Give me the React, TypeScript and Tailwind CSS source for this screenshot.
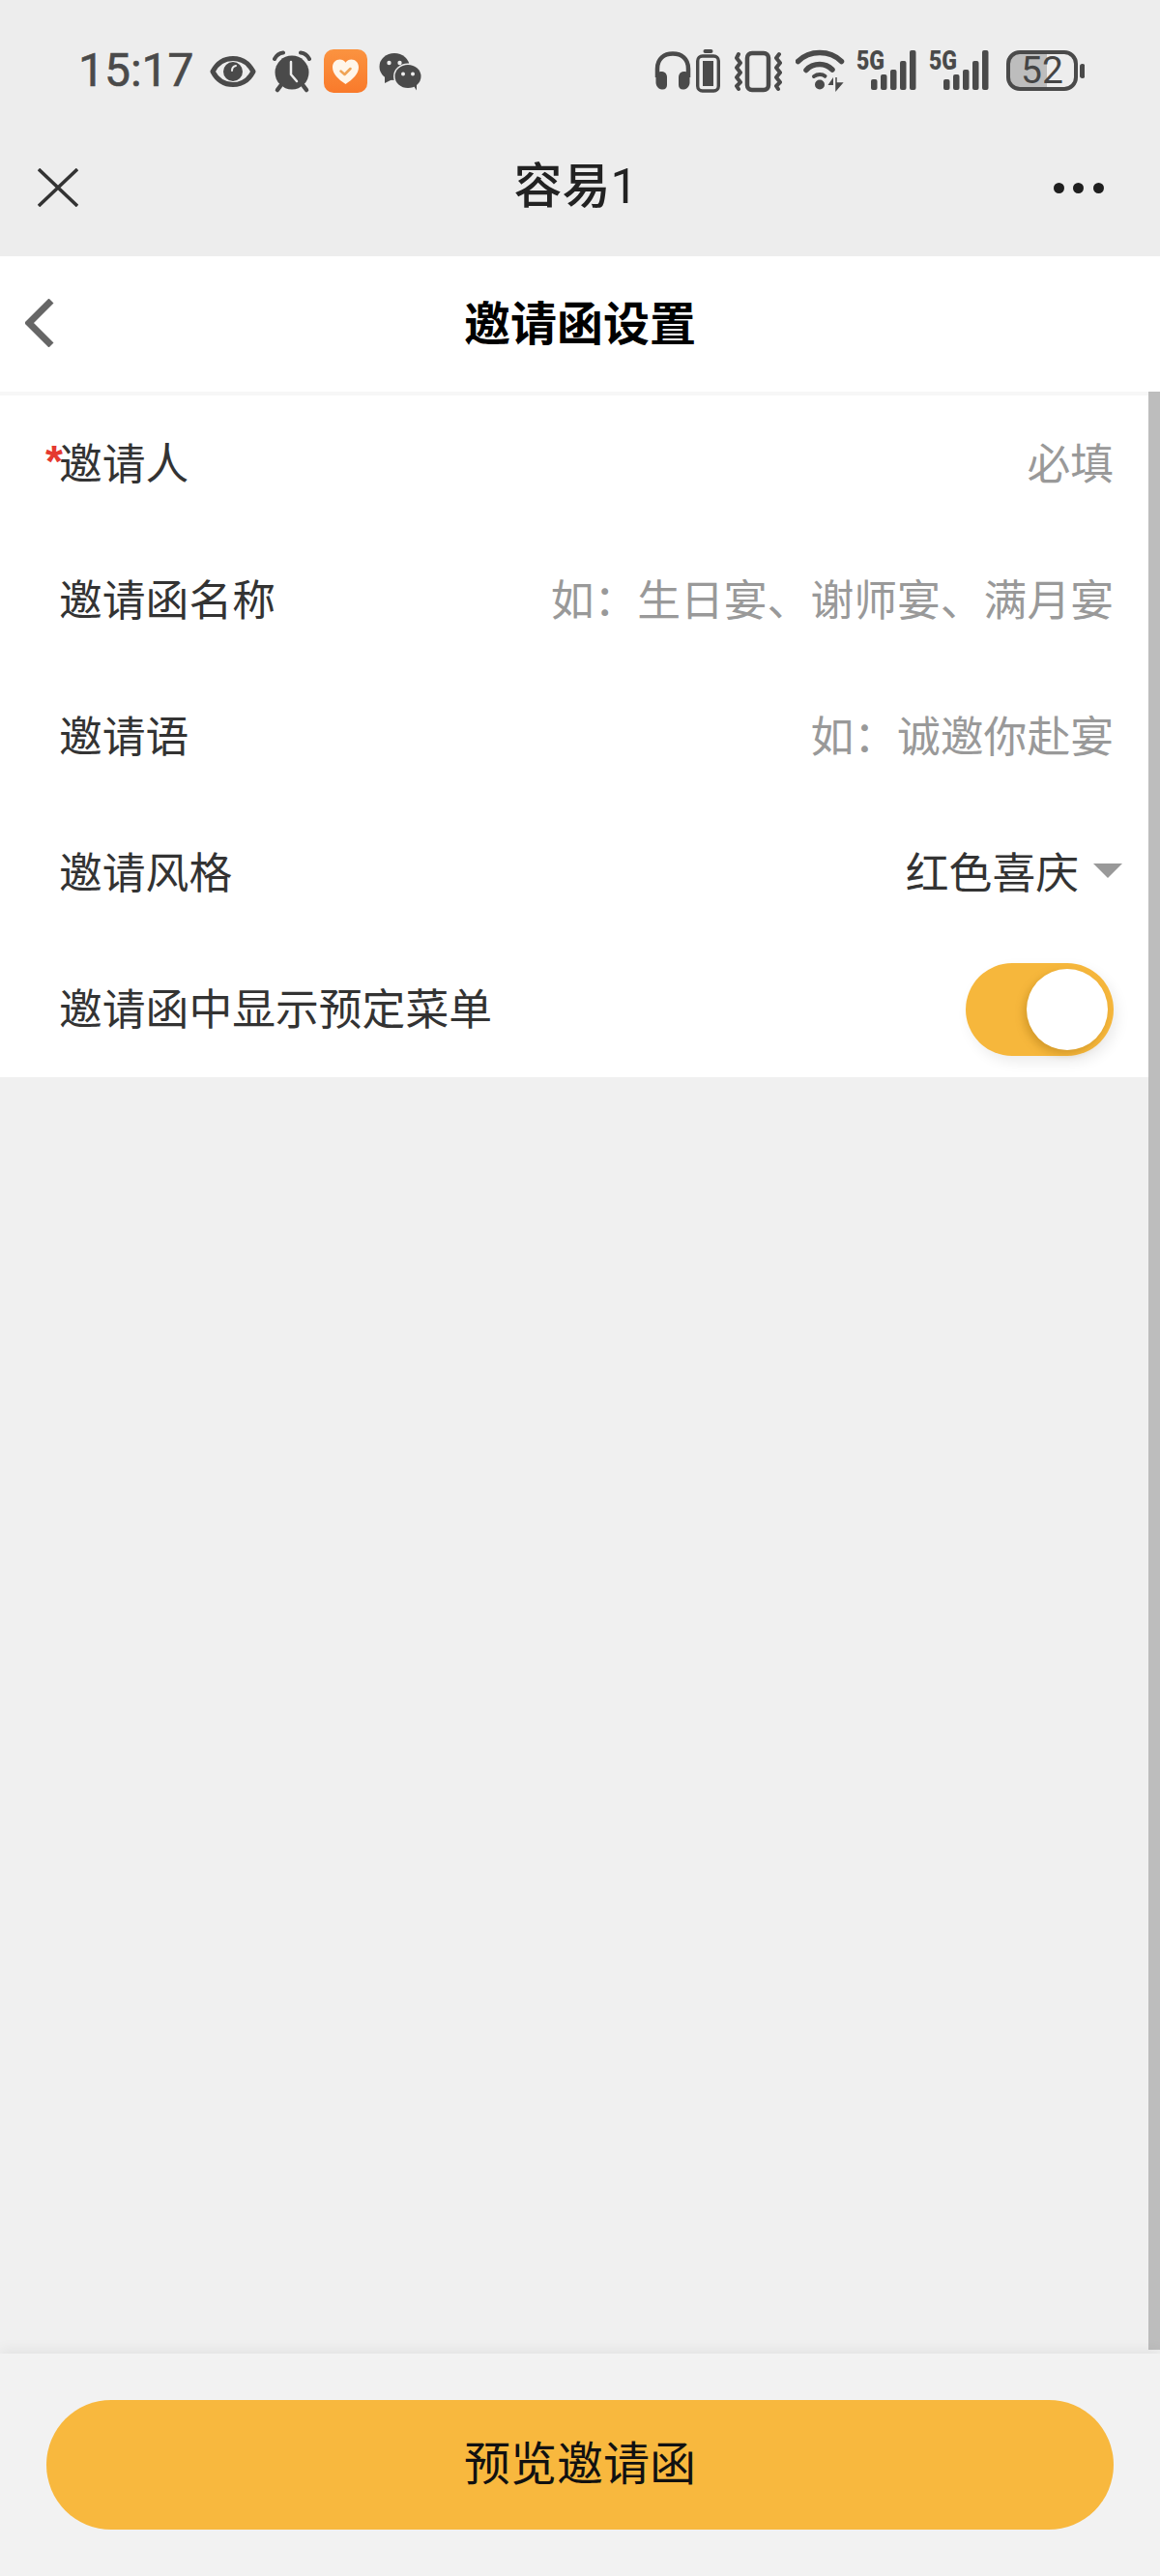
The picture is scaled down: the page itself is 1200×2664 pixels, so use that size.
import React from "react";

const INK = "#4a4a4a";

function Eye() {
  return (
    <svg width="48" height="50" viewBox="0 0 48 50" className="ml-[16px] shrink-0">
      <path d="M3 26C8 16.500 15 12.500 24 12.500S40 16.500 45 26C40 35.500 33 39.500 24 39.500S8 35.500 3 26Z" fill="none" stroke={INK} strokeWidth="5" strokeLinejoin="round" />
      <circle cx="24" cy="26" r="10" fill={INK} />
      <path d="M23 25c0-3 1.500-4.500 4-5" fill="none" stroke="#ededed" strokeWidth="2" strokeLinecap="round" />
    </svg>
  );
}

function Alarm() {
  return (
    <svg width="40" height="50" viewBox="0 0 40 50" className="ml-[17px] shrink-0">
      <circle cx="20" cy="27" r="17.500" fill={INK} />
      <path d="M2 13C4 9 7 7 11 6.500M38 13C36 9 33 7 29 6.500" fill="none" stroke={INK} strokeWidth="4" strokeLinecap="round" />
      <path d="M8 41l-3 4M32 41l3 4" stroke={INK} strokeWidth="4.500" strokeLinecap="round" />
      <path d="M19 16v13l6 7" fill="none" stroke="#ededed" strokeWidth="2.500" strokeLinecap="round" strokeLinejoin="round" />
    </svg>
  );
}

function Health() {
  return (
    <svg width="45" height="50" viewBox="0 0 45 50" className="ml-[13px] shrink-0">
      <defs>
        <linearGradient id="healthBg" x1="0" y1="0" x2="0" y2="1">
          <stop offset="0" stopColor="#fb9340" />
          <stop offset="1" stopColor="#f97a2b" />
        </linearGradient>
      </defs>
      <rect x="0" y="3" width="45" height="45" rx="10" fill="url(#healthBg)" />
      <path d="M22.500 39C15 34 9 28.500 9 21.500 9 16.500 12.500 13.500 16.500 13.500c2.500 0 4.500 1 6 3.200 1.500-2.200 3.500-3.200 6-3.200 4 0 7.500 3 7.500 8 0 7-6 12.500-13.500 17.500Z" fill="#fff6ea" />
      <path d="M17.500 25.500l4 3.500 6-6" fill="none" stroke="#f0a455" strokeWidth="2.500" strokeLinecap="round" strokeLinejoin="round" />
    </svg>
  );
}

function Wechat() {
  return (
    <svg width="44" height="50" viewBox="0 0 44 50" className="ml-[12px] shrink-0">
      <ellipse cx="16" cy="21" rx="15.500" ry="14" fill={INK} />
      <path d="M6 31l0 7 8-4Z" fill={INK} />
      <circle cx="10.500" cy="17" r="2.200" fill="#ededed" />
      <circle cx="21.500" cy="17" r="2.200" fill="#ededed" />
      <ellipse cx="30" cy="31" rx="15" ry="13.500" fill="#ededed" />
      <ellipse cx="30" cy="31" rx="13.500" ry="12" fill={INK} />
      <path d="M36 41l3 4.500 0-7Z" fill={INK} />
      <circle cx="25" cy="28.500" r="2" fill="#ededed" />
      <circle cx="35" cy="28.500" r="2" fill="#ededed" />
    </svg>
  );
}

function Headphones() {
  return (
    <svg width="38" height="50" viewBox="0 0 38 50" className="shrink-0">
      <path d="M3 32V23C3 12.500 10 7.500 19 7.500s16 5 16 15.500v9" fill="none" stroke={INK} strokeWidth="4.500" />
      <path d="M1.500 32c0-4 3-6.500 6.500-6 3.500.5 5 3 5 6v8c0 3-2 5-5.500 4.500C4 44 1.500 41 1.500 37Z" fill={INK} />
      <path d="M36.500 32c0-4-3-6.500-6.500-6-3.500.5-5 3-5 6v8c0 3 2 5 5.500 4.500C34 44 36.500 41 36.500 37Z" fill={INK} />
    </svg>
  );
}

function SmallBattery() {
  return (
    <svg width="25" height="50" viewBox="0 0 25 50" className="ml-[5px] shrink-0">
      <rect x="7.500" y="3" width="10" height="4" rx="2" fill={INK} />
      <rect x="1.700" y="10" width="21.600" height="36" rx="5" fill="none" stroke={INK} strokeWidth="3.400" />
      <rect x="7" y="15" width="11" height="26" fill={INK} />
    </svg>
  );
}

function Vibrate() {
  return (
    <svg width="50" height="50" viewBox="0 0 50 50" className="ml-[14px] shrink-0">
      <rect x="14" y="7" width="22" height="38" rx="5" fill="none" stroke={INK} strokeWidth="4.500" />
      <path d="M5 8 3 12 7 17 3 22 7 27 3 32 7 37 3 41 5 44" fill="none" stroke={INK} strokeWidth="4" strokeLinejoin="round" strokeLinecap="round" />
      <path d="M47 8 44 12 48 17 44 22 48 27 44 32 48 37 44 41 46 44" fill="none" stroke={INK} strokeWidth="4" strokeLinejoin="round" strokeLinecap="round" />
    </svg>
  );
}

function Wifi() {
  return (
    <svg width="51" height="50" viewBox="0 0 51 50" className="ml-[14px] shrink-0">
      <path d="M2.500 15.500C8.500 9.500 15.500 6.500 25 6.500S41.500 9.500 47.500 15.500" fill="none" stroke={INK} strokeWidth="5.500" strokeLinecap="round" />
      <path d="M11 24.500C14.500 20.500 19.500 18.500 25 18.500s9.500 2 13 5.500" fill="none" stroke={INK} strokeWidth="5.500" strokeLinecap="round" />
      <path d="M19 31c2-1.500 3.800-2 6-2s4 .5 5.500 1.800" fill="none" stroke={INK} strokeWidth="4" strokeLinecap="round" />
      <circle cx="25" cy="39.500" r="5" fill={INK} />
      <path d="M39 45V32l-5.500 8H39Z" fill={INK} />
      <path d="M42 45V32l0 0 0 13 6-7H42Z" fill={INK} stroke={INK} strokeWidth="1.500" />
    </svg>
  );
}

function Signal({ className }: { className: string }) {
  const bars = [
    [15, 30],
    [25, 25],
    [35, 20],
    [45, 11],
    [55, 0],
  ];
  return (
    <svg width="62" height="50" viewBox="0 0 62 50" className={className}>
      <text x="0" y="24" textLength="29" lengthAdjust="spacingAndGlyphs" fontFamily="Roboto, sans-serif" fontWeight="900" fontSize="27" fill={INK}>
        5G
      </text>
      {bars.map(([x, top]) => (
        <rect key={x} x={x} y={top + 4} width="6.500" height={41 - top} rx="2" fill={INK} />
      ))}
    </svg>
  );
}

function BigBattery() {
  return (
    <div className="relative ml-[18px] h-[50px] w-[81px] shrink-0">
      <svg width="81" height="50" viewBox="0 0 81 50" className="block">
        <path d="M14 6h28v37H14a10 10 0 0 1-10-10V16A10 10 0 0 1 14 6Z" fill="#bdbdbd" />
        <rect x="2" y="6" width="70" height="38" rx="12" fill="none" stroke={INK} strokeWidth="4" />
        <rect x="76" y="18" width="5.500" height="15" rx="2.700" fill={INK} />
      </svg>
      <span className="absolute left-[15px] top-[2px] font-['Roboto',sans-serif] text-[39px] leading-[46px] text-[#454545]">52</span>
    </div>
  );
}

function Row({ label, children, required }: { label: string; children: React.ReactNode; required?: boolean }) {
  return (
    <div className="relative flex h-[141px] items-center justify-between pl-[61px] pr-[36px]">
      {required && (
        <span className="absolute left-[47px] top-[43px] font-['Liberation_Sans',sans-serif] text-[46px] font-bold leading-[50px] text-[#e5392f]">*</span>
      )}
      <span className="mb-[6px] text-[44.8px] leading-[60px] text-[#333333]">{label}</span>
      {children}
    </div>
  );
}

function Placeholder({ children }: { children: React.ReactNode }) {
  return <span className="mb-[6px] text-[44.8px] leading-[60px] text-[#999999]">{children}</span>;
}

export default function App() {
  return (
    <div className="flex h-[2664px] w-[1200px] flex-col overflow-hidden bg-[#f0f0f0] font-['Noto_Sans_CJK_SC','Noto_Sans',sans-serif]">
      <header className="bg-[#ededed]">
        <div className="flex h-[123px] items-start justify-between pl-[81px] pr-[78px] pt-[48px]">
          <div className="flex items-start">
            <span className="font-['Roboto',sans-serif] text-[48px] font-normal leading-[50px] text-[#4a4a4a] [-webkit-text-stroke:0.6px_#4a4a4a]">15:17</span>
            <Eye />
            <Alarm />
            <Health />
            <Wechat />
          </div>
          <div className="flex items-start">
            <Headphones />
            <SmallBattery />
            <Vibrate />
            <Wifi />
            <Signal className="ml-[12px] shrink-0" />
            <Signal className="ml-[13px] shrink-0" />
            <BigBattery />
          </div>
        </div>
        <div className="relative flex h-[142px] items-center justify-between pl-[39px] pr-[58px]">
          <svg width="42" height="40" viewBox="0 0 42 40" className="shrink-0">
            <path d="M1 1l40 38M41 1 1 39" fill="none" stroke="#333333" strokeWidth="3.500" />
          </svg>
          <span className="mb-[8px] ml-[20px] text-[50px] leading-[64px] text-[#222222]">
            <span className="font-medium">容易</span>
            <span className="font-['Roboto',sans-serif] font-normal">1</span>
          </span>
          <div className="flex w-[52px] items-center justify-between">
            <span className="h-[11px] w-[11px] rounded-full bg-[#1f1f1f]" />
            <span className="h-[11px] w-[11px] rounded-full bg-[#1f1f1f]" />
            <span className="h-[11px] w-[11px] rounded-full bg-[#1f1f1f]" />
          </div>
        </div>
      </header>

      <div className="relative flex h-[140px] items-center justify-center bg-white">
        <svg width="30" height="50" viewBox="0 0 30 50" className="absolute left-[26px] top-[44px]">
          <path d="M27 2 4 25l23 23" fill="none" stroke="#666666" strokeWidth="7" />
        </svg>
        <h1 className="mb-[8px] text-[48px] font-bold leading-[64px] text-[#000000]">邀请函设置</h1>
      </div>

      <main className="relative flex min-h-0 flex-1">
        <div className="flex min-w-0 flex-1 flex-col">
          <div className="h-[4px] bg-[#f7f7f7]" />
          <section className="bg-white">
            <Row label="邀请人" required>
              <Placeholder>必填</Placeholder>
            </Row>
            <Row label="邀请函名称">
              <Placeholder>如：生日宴、谢师宴、满月宴</Placeholder>
            </Row>
            <Row label="邀请语">
              <Placeholder>如：诚邀你赴宴</Placeholder>
            </Row>
            <Row label="邀请风格">
              <div className="-mr-[9px] flex items-center gap-[15px]">
                <span className="mb-[6px] text-[44.8px] leading-[60px] text-[#333333]">红色喜庆</span>
                <span className="mb-[4px] h-0 w-0 border-x-[15px] border-t-[15px] border-x-transparent border-t-[#999999]" />
              </div>
            </Row>
            <Row label="邀请函中显示预定菜单">
              <div className="relative h-[96px] w-[153px] rounded-full bg-[#f6b73c] shadow-[4px_6px_14px_rgba(0,0,0,0.08)]">
                <span className="absolute right-[6px] top-[6px] h-[84px] w-[84px] rounded-full bg-white shadow-[-3px_4px_8px_rgba(150,100,10,0.35)]" />
              </div>
            </Row>
          </section>
        </div>
        <div className="mb-[4px] w-[12px] bg-[#bdbdbd]" />
      </main>

      <footer className="relative flex h-[230px] items-start bg-[#f2f2f2] px-[48px] pt-[48px] shadow-[0_-5px_12px_rgba(0,0,0,0.05)]">
        <button className="flex h-[134px] w-full items-center justify-center rounded-full bg-[#f8b83e] pb-[10px] text-[48px] leading-[64px] text-[#111111]">
          预览邀请函
        </button>
      </footer>
    </div>
  );
}
